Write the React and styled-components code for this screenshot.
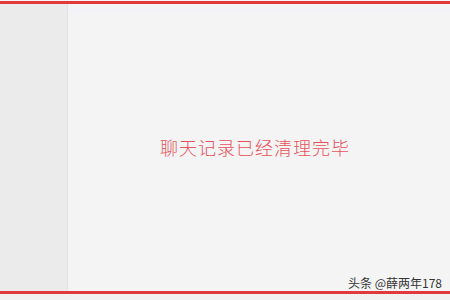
import React from 'react'
import styled, { createGlobalStyle } from 'styled-components'

const Global = createGlobalStyle`
  html, body {
    margin: 0;
    padding: 0;
    background: #f4f4f4;
  }
  body {
    font-family: "Noto Sans CJK SC", "Liberation Sans", sans-serif;
  }
`

const Frame = styled.div`
  position: relative;
  width: 450px;
  height: 300px;
  display: flex;
  flex-direction: column;
  background: #f4f4f4;
  overflow: hidden;
`

const RedLine = styled.div`
  height: 3px;
  background: #e2393d;
  margin-top: ${p => p.top || 0}px;
  flex-shrink: 0;
`

const Content = styled.div`
  flex: 1;
  display: flex;
`

const Sidebar = styled.div`
  width: 67px;
  background: #ebebeb;
  border-right: 1px solid #e2e2e2;
  box-shadow: 1px 0 0 #f9f9f9;
`

const Main = styled.div`
  flex: 1;
  display: flex;
  flex-direction: column;
  background: #f4f4f4;
`

const Strip = styled.div`
  height: 6px;
  margin-top: 4px;
  background: #f3f3f7;
`

const Center = styled.div`
  flex: 1;
  display: flex;
  align-items: center;
  justify-content: center;
  padding-bottom: 12px;
  padding-right: 8px;
`

const Message = styled.span`
  color: #e6535c;
  font-size: 18px;
  font-weight: 300;
  letter-spacing: 1px;
`

const Footer = styled.div`
  height: 6px;
  background: #f1f1f1;
`

const Watermark = styled.span`
  position: absolute;
  right: 8px;
  bottom: 9px;
  font-size: 12px;
  color: #333;
  text-shadow: 0 0 1px #fff;
`

export default function App() {
  return (
    <Frame>
      <Global />
      <RedLine top={1} />
      <Content>
        <Sidebar />
        <Main>
          <Strip />
          <Center>
            <Message>聊天记录已经清理完毕</Message>
          </Center>
        </Main>
      </Content>
      <RedLine />
      <Footer />
      <Watermark>头条 @薛两年178</Watermark>
    </Frame>
  )
}
